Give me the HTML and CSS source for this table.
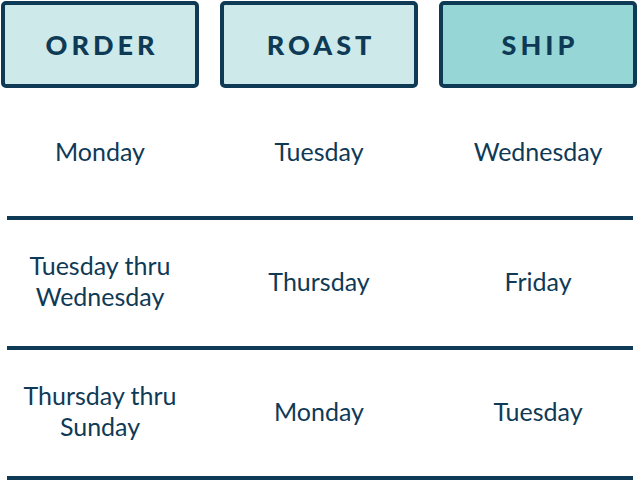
FILE: index.html
```html
<!DOCTYPE html>
<html>
<head>
<meta charset="utf-8">
<link rel="stylesheet" href="styles.css">
</head>
<body>
<div class="schedule">
  <div class="heads">
    <div class="head">ORDER</div>
    <div class="head">ROAST</div>
    <div class="head head-ship">SHIP</div>
  </div>
  <div class="row">
    <div class="cell">Monday</div>
    <div class="cell">Tuesday</div>
    <div class="cell">Wednesday</div>
  </div>
  <div class="rule"></div>
  <div class="row">
    <div class="cell">Tuesday thru<br>Wednesday</div>
    <div class="cell">Thursday</div>
    <div class="cell">Friday</div>
  </div>
  <div class="rule"></div>
  <div class="row">
    <div class="cell">Thursday thru<br>Sunday</div>
    <div class="cell">Monday</div>
    <div class="cell">Tuesday</div>
  </div>
  <div class="rule"></div>
</div>
</body>
</html>
```
FILE: styles.css
```css
html, body {
  margin: 0;
  padding: 0;
  background: #ffffff;
}
body {
  font-family: Lato, "Open Sans", sans-serif;
  color: #0f3a56;
}
.schedule {
  width: 640px;
}
.heads {
  display: grid;
  grid-template-columns: 198px 198px 198px;
  column-gap: 21px;
  padding: 1px 0 2px 1px;
}
.head {
  box-sizing: border-box;
  height: 87px;
  border: 4px solid #0f3a56;
  border-radius: 5px;
  background: #cde9ea;
  display: flex;
  align-items: center;
  justify-content: center;
  font-weight: 900;
  font-size: 27px;
  letter-spacing: 4px;
  padding-left: 4px;
}
.head-ship {
  background: #97d6d7;
}
.row {
  display: grid;
  grid-template-columns: 198px 198px 198px;
  column-gap: 21px;
  padding-left: 1px;
  height: 126px;
  align-items: center;
}
.cell {
  text-align: center;
  font-size: 25px;
  line-height: 31px;
  padding-bottom: 4px;
}
.rule {
  height: 4px;
  margin: 0 7px;
  background: #0f3a56;
}
```
